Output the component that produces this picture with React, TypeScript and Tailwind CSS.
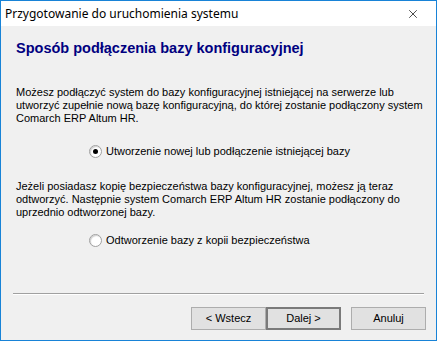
import { X } from "lucide-react"

function Radio({ checked, label }: { checked?: boolean; label: string }) {
  return (
    <div className="flex items-center gap-[4px]">
      <span className="w-[13px] h-[13px] rounded-full border border-[#a0a0a0] bg-white flex items-center justify-center shadow-[inset_1px_1px_1px_#cfcfcf]">
        {checked && <span className="w-[5px] h-[5px] rounded-full bg-black" />}
      </span>
      <span>{label}</span>
    </div>
  )
}

function Btn({ label, primary }: { label: string; primary?: boolean }) {
  return (
    <div
      className={
        "w-[75px] h-[23px] flex items-center justify-center bg-[#e1e1e1] " +
        (primary ? "border-2 border-[#7a7a7a]" : "border border-[#adadad]")
      }
    >
      {label}
    </div>
  )
}

export default function App() {
  return (
    <div
      className="w-[437px] h-[341px] flex flex-col border border-[#1883d7] bg-[#f0f0f0] text-[11px] leading-[13px] text-black overflow-hidden"
      style={{ fontFamily: '"Liberation Sans", Arial, sans-serif' }}
    >
      <div className="h-[25px] shrink-0 bg-white flex items-center justify-between pl-[4px] pr-[16px]">
        <p className="text-[12px]" style={{ fontFamily: '"Noto Sans", sans-serif' }}>
          Przygotowanie do uruchomienia systemu
        </p>
        <X size={14} strokeWidth={1.2} color="#000000" />
      </div>

      <div className="flex flex-col flex-1 px-[15px]">
        <h1 className="mt-[14px] text-[14.5px] leading-[17px] font-bold text-[#000080]">
          Sposób podłączenia bazy konfiguracyjnej
        </h1>

        <p className="mt-[29px] w-[412px]">
          Możesz podłączyć system do bazy konfiguracyjnej istniejącej na serwerze lub utworzyć zupełnie nową bazę konfiguracyjną, do której zostanie podłączony system Comarch ERP Altum HR.
        </p>
        <div className="mt-[20px] ml-[73px]">
          <Radio checked label="Utworzenie nowej lub podłączenie istniejącej bazy" />
        </div>

        <p className="mt-[22px] w-[400px]">
          Jeżeli posiadasz kopię bezpieczeństwa bazy konfiguracyjnej, możesz ją teraz odtworzyć. Następnie system Comarch ERP Altum HR zostanie podłączony do uprzednio odtworzonej bazy.
        </p>
        <div className="mt-[15px] ml-[73px]">
          <Radio label="Odtworzenie bazy z kopii bezpieczeństwa" />
        </div>

        <div className="mt-auto mx-[-3px] border-t border-[#a0a0a0] border-b border-b-white" />

        <div className="flex justify-end mt-[12px] mb-[10px] mr-[-5px]">
          <Btn label="< Wstecz" />
          <Btn label="Dalej >" primary />
          <div className="ml-[10px]">
            <Btn label="Anuluj" />
          </div>
        </div>
      </div>
    </div>
  )
}
